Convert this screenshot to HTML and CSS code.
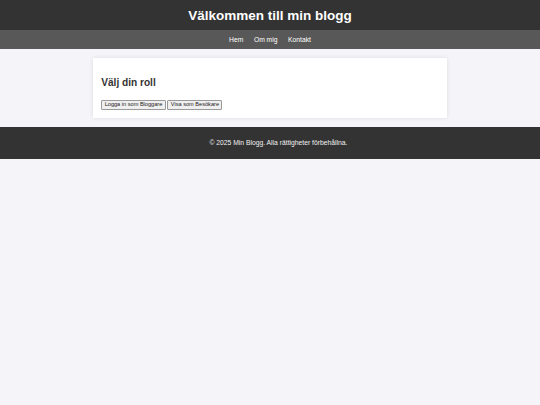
FILE: index.html
```html
<!DOCTYPE html>
<html lang="sv">
<head>
<meta charset="utf-8">
<title>Min Blogg</title>
<link rel="stylesheet" href="styles.css">
</head>
<body>
<header class="site-header">
  <h1 class="site-title">Välkommen till min blogg</h1>
</header>
<nav class="site-nav">
  <a href="#" class="nav-link">Hem</a>
  <a href="#" class="nav-link">Om mig</a>
  <a href="#" class="nav-link">Kontakt</a>
</nav>
<main class="card">
  <h2 class="card-title">Välj din roll</h2>
  <div class="actions">
    <button class="btn" type="button">Logga in som Bloggare</button>
    <button class="btn" type="button">Visa som Besökare</button>
  </div>
</main>
<footer class="site-footer">
  <p class="footer-text">© 2025 Min Blogg. Alla rättigheter förbehållna.</p>
</footer>
</body>
</html>
```

FILE: styles.css
```css
html, body {
  margin: 0;
  padding: 0;
}

body {
  font-family: "Liberation Sans", Arial, sans-serif;
  background: #f4f4f9;
  color: #333;
}

.site-header {
  background: #333;
  color: #fff;
  height: 30px;
  display: flex;
  align-items: center;
  justify-content: center;
}

.site-title {
  margin: 0;
  font-size: 13.5px;
  font-weight: bold;
  line-height: 1;
  padding-top: 1px;
}

.site-nav {
  background: #585858;
  height: 19px;
  display: flex;
  align-items: center;
  justify-content: center;
  gap: 10.6px;
}

.nav-link {
  color: #fff;
  text-decoration: none;
  font-size: 6.75px;
}

.card {
  width: 337.5px;
  margin: 8.6px auto 8.4px;
  padding: 8.4px;
  background: #fff;
  box-shadow: 0 0 4.2px rgba(0, 0, 0, 0.1);
}

.card-title {
  margin: 11px 0 12px;
  font-size: 10.125px;
  font-weight: bold;
  color: #333;
}

.actions {
  display: flex;
  gap: 1.7px;
}

.btn {
  font-family: "Liberation Sans", Arial, sans-serif;
  font-size: 5.625px;
  line-height: 1;
  padding: 1.2px 2.4px;
  margin: 0;
  color: #222;
  background: #efefef;
  border: 1px solid #999;
  border-radius: 1px;
}

.site-footer {
  background: #333;
  color: #f2f2f2;
  height: 32px;
  padding-left: 16.8px;
  display: flex;
  align-items: center;
  justify-content: center;
}

.footer-text {
  margin: 0;
  font-size: 6.75px;
}
```
